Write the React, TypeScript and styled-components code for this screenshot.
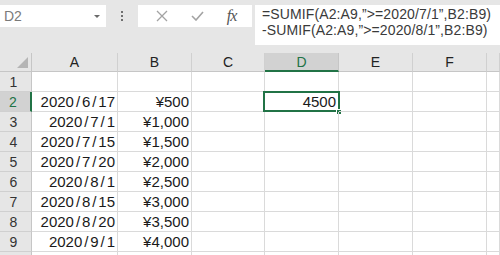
import React from "react";
import styled, { createGlobalStyle } from "styled-components";

const Global = createGlobalStyle`
  html, body { margin: 0; padding: 0; background: #ffffff; }
  body { width: 500px; height: 255px; overflow: hidden; font-family: "Liberation Sans", Arial, sans-serif; }
`;

const GREEN = "#217346";
const GRID = "#dadada";

const Page = styled.div`
  width: 500px;
  height: 255px;
  overflow: hidden;
`;

const TopBar = styled.div`
  height: 53px;
  box-sizing: border-box;
  background: #e6e6e6;
  padding-top: 5px;
  display: flex;
  align-items: flex-start;
`;

const NameBox = styled.div`
  width: 106px;
  height: 22px;
  background: #fff;
  display: flex;
  align-items: center;
  justify-content: space-between;
  box-sizing: border-box;
  padding: 0 6px 0 4px;
  font-size: 14px;
  color: #7a7a7a;
`;

const Caret = styled.span`
  width: 0;
  height: 0;
  border-left: 3px solid transparent;
  border-right: 3px solid transparent;
  border-top: 3px solid #6a6a6a;
  margin-top: 1px;
`;

const Dots = styled.div`
  width: 32px;
  height: 22px;
  display: flex;
  flex-direction: column;
  align-items: center;
  justify-content: center;
  gap: 2px;
  & > span {
    width: 2px;
    height: 2px;
    background: #6f6f6f;
  }
`;

const IconBox = styled.div`
  width: 114px;
  height: 22px;
  background: #fff;
  display: flex;
  align-items: center;
  justify-content: space-around;
  box-sizing: border-box;
  padding: 0 4px 0 6px;
`;

const Fx = styled.span`
  font-family: "Liberation Serif", "Times New Roman", serif;
  font-style: italic;
  font-size: 16px;
  color: #555;
  letter-spacing: -1px;
`;

const FormulaBox = styled.div`
  flex: 1;
  margin-left: 3px;
  height: 40px;
  background: #fff;
  box-sizing: border-box;
  padding: 1px 0 0 7px;
  font-size: 14px;
  line-height: 16px;
  letter-spacing: 0.12px;
  color: #3a3a3a;
  white-space: pre;
`;

const Grid = styled.div`
  display: grid;
  grid-template-columns: 32px 86px 74px 73px 74px 74px 74px 1fr;
  grid-template-rows: 19px repeat(10, 20px);
`;

const Corner = styled.div`
  background: #e6e6e6;
  border-right: 1px solid #c6c6c6;
  border-bottom: 1px solid #c6c6c6;
  box-sizing: border-box;
  position: relative;
  &::after {
    content: "";
    position: absolute;
    right: 3px;
    bottom: 3px;
    width: 0;
    height: 0;
    border-left: 11px solid transparent;
    border-bottom: 11px solid #b5b5b5;
  }
`;

const ColHead = styled.div<{ $sel?: boolean }>`
  background: ${(p) => (p.$sel ? "#d2d2d2" : "#e6e6e6")};
  color: ${(p) => (p.$sel ? GREEN : "#222")};
  border-right: 1px solid ${(p) => (p.$sel ? "#c6c6c6" : "#d0d0d0")};
  border-bottom: ${(p) => (p.$sel ? `2px solid ${GREEN}` : "1px solid #c6c6c6")};
  box-sizing: border-box;
  display: flex;
  align-items: center;
  justify-content: center;
  font-size: 14px;
  padding-top: ${(p) => (p.$sel ? "1px" : "0")};
`;

const RowHead = styled.div<{ $sel?: boolean }>`
  background: ${(p) => (p.$sel ? "#d2d2d2" : "#e6e6e6")};
  color: ${(p) => (p.$sel ? GREEN : "#333")};
  border-right: ${(p) => (p.$sel ? `2px solid ${GREEN}` : "1px solid #c6c6c6")};
  border-bottom: 1px solid #d0d0d0;
  box-sizing: border-box;
  display: flex;
  align-items: center;
  justify-content: center;
  padding-right: 4px;
  font-size: 14px;
`;

const Cell = styled.div<{ $sel?: boolean }>`
  border-right: 1px solid ${GRID};
  border-bottom: 1px solid ${GRID};
  box-sizing: border-box;
  display: flex;
  align-items: center;
  justify-content: flex-end;
  padding-right: 2px;
  font-size: 15px;
  line-height: 16px;
  color: #1a1a1a;
  white-space: nowrap;
  position: relative;
  ${(p) =>
    p.$sel &&
    `
    &::before {
      content: "";
      position: absolute;
      left: -2px;
      top: -1px;
      right: -2px;
      bottom: -1px;
      border: 2px solid ${GREEN};
      pointer-events: none;
    }
    &::after {
      content: "";
      position: absolute;
      right: -4px;
      bottom: -4px;
      width: 6px;
      height: 6px;
      background: ${GREEN};
      border: 1px solid #fff;
      box-sizing: border-box;
    }
  `}
`;

const Slash = styled.span`
  display: inline-block;
  width: 8px;
  text-align: center;
`;

const DateText = ({ v }: { v: string }) => {
  const parts = v.split("/");
  return (
    <span>
      {parts.map((p, i) => (
        <React.Fragment key={i}>
          {i > 0 && <Slash>/</Slash>}
          {p}
        </React.Fragment>
      ))}
    </span>
  );
};

const rows: [string, string][] = [
  ["2020/6/17", "¥500"],
  ["2020/7/1", "¥1,000"],
  ["2020/7/15", "¥1,500"],
  ["2020/7/20", "¥2,000"],
  ["2020/8/1", "¥2,500"],
  ["2020/8/15", "¥3,000"],
  ["2020/8/20", "¥3,500"],
  ["2020/9/1", "¥4,000"],
];

const cols = ["A", "B", "C", "D", "E", "F", ""];

export default function App() {
  const body: React.ReactNode[] = [];
  for (let r = 1; r <= 10; r++) {
    const data = r >= 2 && r <= 9 ? rows[r - 2] : null;
    body.push(
      <RowHead key={`h${r}`} $sel={r === 2}>
        {r <= 9 ? r : null}
      </RowHead>
    );
    body.push(<Cell key={`a${r}`}>{data && <DateText v={data[0]} />}</Cell>);
    body.push(<Cell key={`b${r}`}>{data && data[1]}</Cell>);
    body.push(<Cell key={`c${r}`} />);
    body.push(
      <Cell key={`d${r}`} $sel={r === 2}>
        {r === 2 ? "4500" : null}
      </Cell>
    );
    body.push(<Cell key={`e${r}`} />);
    body.push(<Cell key={`f${r}`} />);
    body.push(<Cell key={`g${r}`} />);
  }

  return (
    <Page>
      <Global />
      <TopBar>
        <NameBox>
          <span>D2</span>
          <Caret />
        </NameBox>
        <Dots>
          <span />
          <span />
          <span />
        </Dots>
        <IconBox>
          <svg width="12" height="12" viewBox="0 0 12 12">
            <path d="M1 1 L11 11 M11 1 L1 11" stroke="#a3a3a3" strokeWidth="1.3" fill="none" />
          </svg>
          <svg width="13" height="10" viewBox="0 0 13 10">
            <path d="M1 5 L5 9 L12 1" stroke="#a3a3a3" strokeWidth="1.6" fill="none" />
          </svg>
          <Fx>fx</Fx>
        </IconBox>
        <FormulaBox>
          {"=SUMIF(A2:A9,”>=2020/7/1”,B2:B9)\n-SUMIF(A2:A9,”>=2020/8/1”,B2:B9)"}
        </FormulaBox>
      </TopBar>
      <Grid>
        <Corner />
        {cols.map((c, i) => (
          <ColHead key={i} $sel={c === "D"}>
            {c}
          </ColHead>
        ))}
        {body}
      </Grid>
    </Page>
  );
}
